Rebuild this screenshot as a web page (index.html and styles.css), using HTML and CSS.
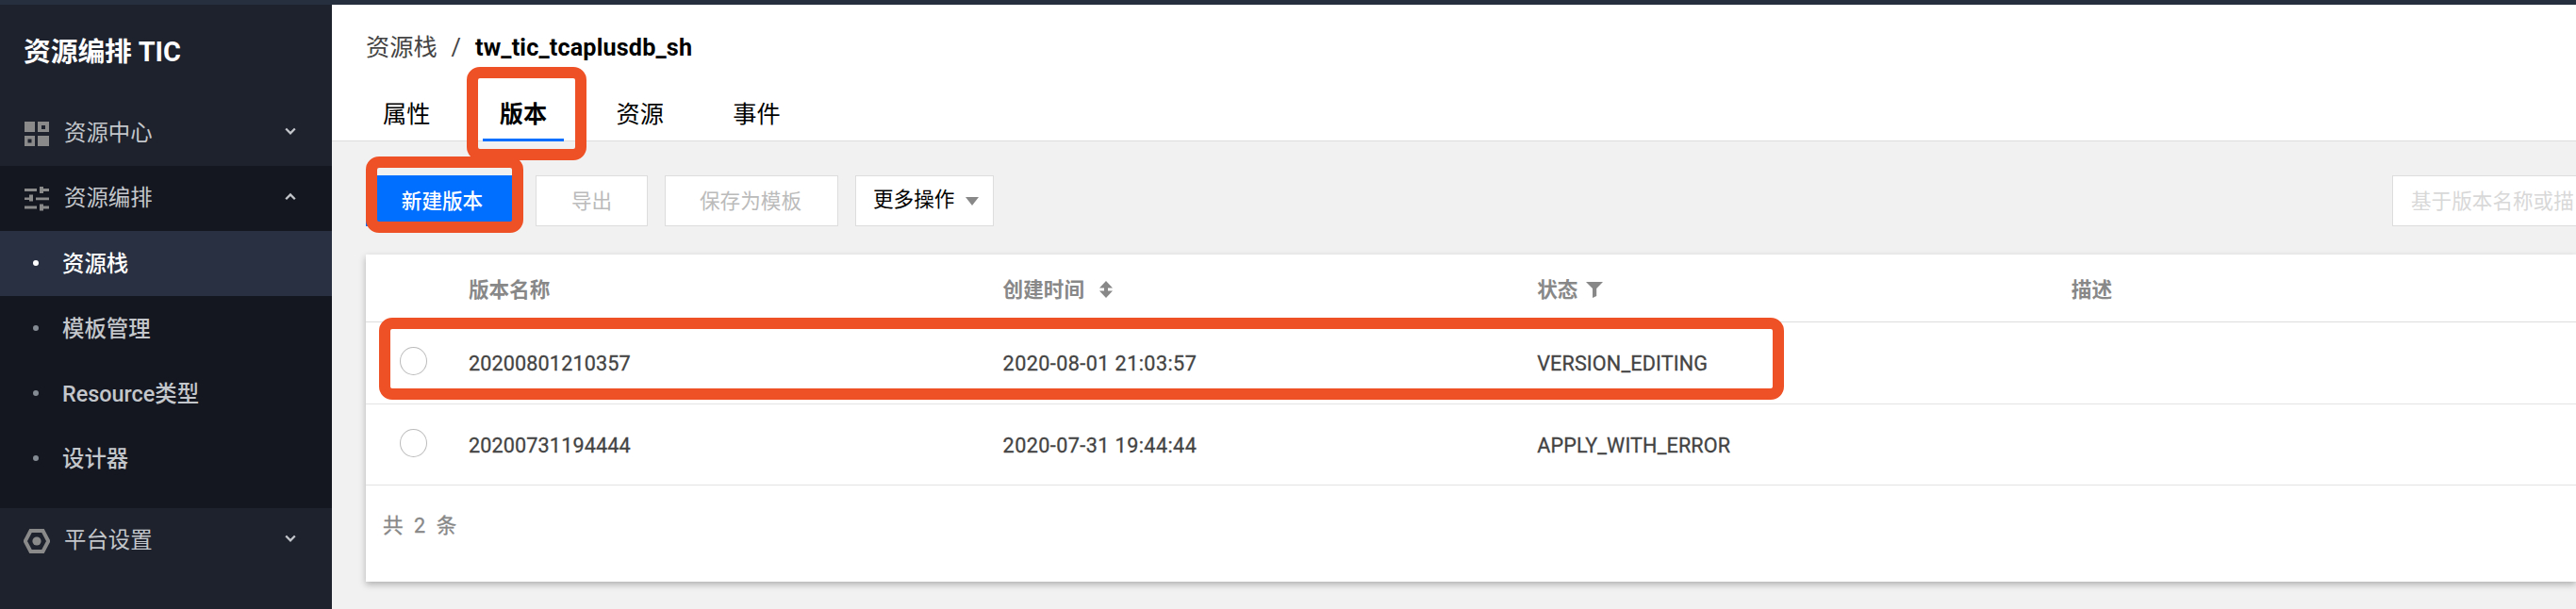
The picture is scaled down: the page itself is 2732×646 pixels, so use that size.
FILE: index.html
```html
<!DOCTYPE html>
<html lang="zh-CN">
<head>
<meta charset="utf-8">
<title>资源编排 TIC</title>
<link rel="stylesheet" href="styles.css">
</head>
<body>
<div class="topbar"></div>
<div class="layout">
  <nav class="sidebar">
    <h1 class="side-title">资源编排 TIC</h1>
    <div class="menu-item">
      <svg class="menu-icon" width="28" height="28" viewBox="0 0 28 28" fill="#8a8a8a" fill-rule="evenodd"><path d="M1 1h11v11H1zM15 1h12v11H15zM19 5v4h4V5zM1 16h11v11H1zM4.500 19.500v4h4v-4zM15 16h12v11H15z"/></svg>
      <span class="menu-label">资源中心</span>
      <svg class="chevron" width="12" height="9" viewBox="0 0 12 9"><path d="M1.200 1.500 6 6.300l4.800-4.800" fill="none" stroke="#c3c7cb" stroke-width="2.300"/></svg>
    </div>
    <div class="menu-group">
      <div class="menu-item">
        <svg class="menu-icon" width="28" height="28" viewBox="0 0 28 28" fill="#8a8a8a"><path d="M1 3h13v3H1zM17 1h4v2h6v3h-6v2h-4zM1 12.500h5v-3h4v7H6v-1.500H1zM13 12.500h14v2.800H13zM1 21.500h13v3H1zM17 19.500h4v2h6v3h-6v2h-4z"/></svg>
        <span class="menu-label">资源编排</span>
        <svg class="chevron" width="12" height="9" viewBox="0 0 12 9"><path d="M1.200 7.300 6 2.500l4.800 4.800" fill="none" stroke="#c3c7cb" stroke-width="2.300"/></svg>
      </div>
      <div class="sub-item active"><i class="dot"></i>资源栈</div>
      <div class="sub-item"><i class="dot"></i>模板管理</div>
      <div class="sub-item"><i class="dot"></i>Resource类型</div>
      <div class="sub-item"><i class="dot"></i>设计器</div>
    </div>
    <div class="menu-item">
      <svg class="menu-icon" width="28" height="28" viewBox="0 0 28 28"><path d="M7.500 3h13L26.300 14l-5.800 11h-13L1.700 14z" fill="none" stroke="#8a8a8a" stroke-width="4"/><circle cx="14" cy="14" r="4.600" fill="#8a8a8a"/></svg>
      <span class="menu-label">平台设置</span>
      <svg class="chevron" width="12" height="9" viewBox="0 0 12 9"><path d="M1.200 1.500 6 6.300l4.800-4.800" fill="none" stroke="#c3c7cb" stroke-width="2.300"/></svg>
    </div>
  </nav>
  <main class="main">
    <header class="header">
      <div class="breadcrumb"><span>资源栈</span><span class="slash">/</span><b class="current">tw_tic_tcaplusdb_sh</b></div>
      <div class="tabs">
        <div class="tab">属性</div>
        <div class="tab selected">版本</div>
        <div class="tab">资源</div>
        <div class="tab">事件</div>
      </div>
    </header>
    <div class="toolbar">
      <button class="btn primary">新建版本</button>
      <button class="btn export">导出</button>
      <button class="btn save">保存为模板</button>
      <button class="btn more">更多操作<i class="caret"></i></button>
      <div class="search">基于版本名称或描</div>
    </div>
    <section class="card">
      <div class="row head">
        <span></span><span>版本名称</span>
        <span>创建时间<svg class="sort" width="16" height="20" viewBox="0 0 16 20" fill="#888"><path d="M8 1l7 7.500h-5v3h5L8 19l-7-7.500h5v-3H1z"/></svg></span>
        <span>状态<svg class="filter" width="18" height="17" viewBox="0 0 18 17" fill="#888"><path d="M0 0h18l-6.800 7v8L7 17V7z"/></svg></span>
        <span>描述</span>
      </div>
      <div class="row">
        <i class="radio"></i><span class="name">20200801210357</span><span class="time">2020-08-01 21:03:57</span><span class="status">VERSION_EDITING</span><span></span>
      </div>
      <div class="row">
        <i class="radio"></i><span class="name">20200731194444</span><span class="time">2020-07-31 19:44:44</span><span class="status error">APPLY_WITH_ERROR</span><span></span>
      </div>
      <div class="footer"><span>共</span><span>2</span><span>条</span></div>
    </section>
  </main>
</div>
<div class="mark mark-tab"></div>
<div class="mark mark-create"></div>
<div class="mark mark-row"></div>
</body>
</html>
```
FILE: styles.css
```css
* { box-sizing: border-box; }
body {
  margin: 0;
  width: 2732px;
  height: 646px;
  overflow: hidden;
  position: relative;
  background: #f1f1f1;
  font-family: Roboto, "Noto Sans CJK SC", sans-serif;
  font-size: 21.6px;
  color: #444;
}
.topbar { height: 5px; background: #262f3e; }
.layout { display: flex; height: 641px; }
.sidebar { width: 352px; flex: none; background: #1e222d; color: #c3c7cb; }
.side-title {
  margin: 0;
  height: 102px;
  padding-left: 25px;
  font-size: 28.8px;
  line-height: 101px;
  font-weight: 700;
  letter-spacing: -0.1px;
  color: #fff;
}
.menu-item { display: flex; align-items: center; height: 69px; padding: 0 38px 0 25px; font-size: 23.4px; }
.menu-icon { flex: none; margin-right: 15px; }
.menu-label { flex: 1; line-height: 69px; }
.chevron { margin-bottom: 4px; }
.menu-group { background: #151720; padding-bottom: 18px; }
.sub-item { display: flex; align-items: center; height: 69px; padding: 0 0 3px 35px; font-size: 23.4px; font-weight: 500; }
.sub-item.active { background: #283041; color: #fff; }
.dot { width: 6px; height: 6px; border-radius: 50%; background: #848b93; margin: 2px 25px 0 0; }
.active .dot { background: #fff; }

.main { flex: 1; min-width: 0; }
.header { height: 145px; padding-left: 36px; background: #fff; border-bottom: 1px solid #ddd; }
.breadcrumb { display: flex; height: 90px; line-height: 92px; font-size: 25.2px; }
.slash { margin: 0 15px; }
.current { color: #000; font-weight: 700; letter-spacing: 0.150px; }
.tabs { display: flex; gap: 37.4px; height: 55px; }
.tab { padding: 0 18px; height: 55px; line-height: 54px; font-size: 25.2px; color: #000; border-bottom: 3px solid transparent; }
.tab.selected { font-weight: 700; border-color: #006eff; }

.toolbar { display: flex; gap: 18px; height: 120px; padding: 36px 0 0 36px; }
.btn {
  height: 54px;
  padding: 0;
  border: 1px solid #ddd;
  background: #fff;
  font: inherit;
  line-height: 54px;
  color: #bbb;
}
.primary { width: 162px; border-color: #006eff; background: #006eff; color: #fff; font-weight: 500; }
.export { width: 119px; }
.save { width: 184px; padding-right: 2px; }
.more { display: flex; align-items: center; width: 147px; padding: 0 0 3px 18px; color: #000; }
.caret { margin: 4px 0 0 12px; border: 7px solid transparent; border-top: 9px solid #888; border-bottom: 0; }
.search { margin-left: auto; width: 195px; height: 54px; padding-left: 19px; border: 1px solid #ddd; border-right: 0; background: #fff; line-height: 54px; color: #d8d8d8; white-space: nowrap; }

.card { margin-left: 36px; height: 347px; background: #fff; box-shadow: 0 3px 7px rgba(0, 0, 0, 0.27); }
.row { display: grid; grid-template-columns: 73px 566.600px 566.600px 566.600px 1fr; align-items: center; height: 86.500px; padding-left: 36px; border-bottom: 1px solid #e3e3e3; letter-spacing: 0.130px; -webkit-text-stroke: 0.300px currentColor; }
.row.head { height: 72px; border-color: #ddd; color: #888; font-weight: 700; letter-spacing: 0; -webkit-text-stroke: 0; }
.radio { width: 29px; height: 30px; margin-bottom: 3px; border: 1px solid #bbb; border-radius: 50%; }
.name, .time, .status { padding-top: 2px; }
.time { letter-spacing: 0.420px; }
.sort { margin-left: 15px; vertical-align: -2px; }
.filter { margin-left: 9px; vertical-align: -1px; }
.footer { display: flex; gap: 11.500px; padding-left: 18px; line-height: 85px; color: #888; -webkit-text-stroke: 0.300px currentColor; }

/* highlight frames over the page */
.mark { position: absolute; border: 12px solid #ef5126; border-radius: 14px; }
.mark-tab { left: 495px; top: 71px; width: 127px; height: 99px; }
.mark-create { left: 388px; top: 166px; width: 167px; height: 81px; }
.mark-row { left: 401.500px; top: 337px; width: 1490.500px; height: 87px; }
```
